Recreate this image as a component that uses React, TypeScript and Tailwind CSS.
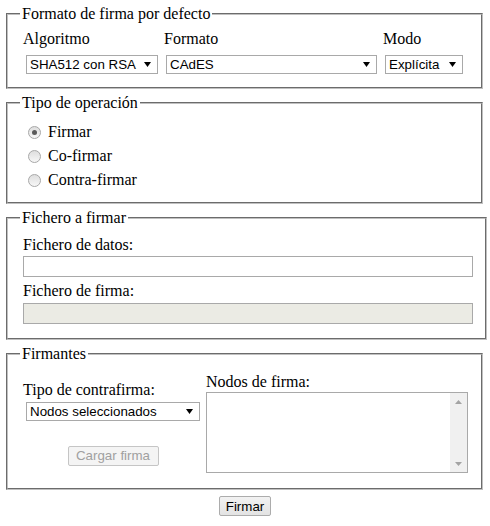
import React from "react";

const sans = "font-['Liberation_Sans',Arial,sans-serif]";

const Arrow = ({ color = "#000" }: { color?: string }) => (
  <svg width="7" height="5" viewBox="0 0 7 5" className="shrink-0">
    <path d="M0 0H7L3.5 5Z" fill={color} />
  </svg>
);

const FakeSelect = ({ value, className }: { value: string; className: string }) => (
  <div
    className={`flex h-[19px] items-center justify-between border border-[#a9a9a9] bg-white pl-[3px] pr-[6px] text-[13.33px] leading-[15px] text-black ${sans} ${className}`}
  >
    <span>{value}</span>
    <Arrow />
  </div>
);

const Radio = ({ label, checked }: { label: string; checked?: boolean }) => (
  <div className="flex h-[24px] items-center">
    <span className="ml-[5px] flex h-[13px] w-[13px] items-center justify-center rounded-full border border-[#a8a8a8] bg-linear-to-b from-[#dedede] to-[#f7f7f7]">
      {checked && <span className="h-[5px] w-[5px] rounded-full bg-[#5a5a5a]" />}
    </span>
    <span className="ml-[7px] leading-[18px]">{label}</span>
  </div>
);

const fieldset =
  "ml-[6px] border-2 border-[#c0c0c0] [border-style:groove] px-[12px]";
const legend = "px-[2px] leading-[18px]";

const App = () => {
  return (
    <div className="flex h-[526px] w-[490px] flex-col bg-white pt-[5px] font-['Liberation_Serif',serif] text-[16px] text-black">
      <fieldset className={`${fieldset} w-[477px] pt-[7px] pb-[13px]`}>
        <legend className={legend}>Formato de firma por defecto</legend>
        <div className="flex pl-[3px]">
          <div className="w-[141px]">
            <div className="leading-[18px]">Algoritmo</div>
            <FakeSelect value="SHA512 con RSA" className="mt-[7px] ml-[3px] w-[132px]" />
          </div>
          <div className="w-[219px]">
            <div className="leading-[18px]">Formato</div>
            <FakeSelect value="CAdES" className="mt-[7px] ml-[2px] w-[211px]" />
          </div>
          <div>
            <div className="leading-[18px]">Modo</div>
            <FakeSelect value="Explícita" className="mt-[7px] ml-[2px] w-[78px]" />
          </div>
        </div>
      </fieldset>

      <fieldset className={`${fieldset} mt-[5px] w-[477px] pt-[8px] pb-[10px]`}>
        <legend className={legend}>Tipo de operación</legend>
        <div className="pl-[3px]">
          <Radio label="Firmar" checked />
          <Radio label="Co-firmar" />
          <Radio label="Contra-firmar" />
        </div>
      </fieldset>

      <fieldset className={`${fieldset} mt-[5px] w-[480px] pt-[9px] pb-[14px]`}>
        <legend className={legend}>Fichero a firmar</legend>
        <div className="pl-[3px]">
          <div className="leading-[18px]">Fichero de datos:</div>
          <div className="mt-[2px] h-[21px] w-[450px] border border-[#a9a9a9] bg-white" />
          <div className="mt-[5px] leading-[18px]">Fichero de firma:</div>
          <div className="mt-[3px] h-[21px] w-[450px] border border-[#a9a9a9] bg-[#ebebe4]" />
        </div>
      </fieldset>

      <fieldset className={`${fieldset} mt-[5px] w-[477px] pt-[10px] pb-[15px]`}>
        <legend className={legend}>Firmantes</legend>
        <div className="flex items-center pl-[3px]">
          <div className="w-[183px]">
            <div className="leading-[18px]">Tipo de contrafirma:</div>
            <FakeSelect value="Nodos seleccionados" className="mt-[3px] ml-[3px] w-[174px]" />
            <div className="mt-[25px] ml-[3px] flex w-[174px] justify-center">
              <button
                disabled
                className={`h-[20px] w-[91px] rounded-[2px] border border-[#c5c5c5] bg-[#f4f4f4] text-[13.33px] leading-[15px] text-[#a0a0a0] ${sans}`}
              >
                Cargar firma
              </button>
            </div>
          </div>
          <div>
            <div className="leading-[18px]">Nodos de firma:</div>
            <div className="mt-[1px] flex h-[81px] w-[262px] border border-[#a9a9a9] bg-white">
              <div className="flex-1" />
              <div className="flex w-[17px] flex-col justify-between bg-[#f0f0f0]">
                <div className="flex h-[17px] items-center justify-center">
                  <svg width="7" height="4" viewBox="0 0 7 4">
                    <path d="M0 4H7L3.5 0Z" fill="#a3a3a3" />
                  </svg>
                </div>
                <div className="flex h-[17px] items-center justify-center">
                  <svg width="7" height="4" viewBox="0 0 7 4">
                    <path d="M0 0H7L3.5 4Z" fill="#a3a3a3" />
                  </svg>
                </div>
              </div>
            </div>
          </div>
        </div>
      </fieldset>

      <div className="mt-[6px] flex justify-center">
        <button
          className={`h-[20px] w-[52px] rounded-[2px] border border-[#acacac] bg-linear-to-b from-[#f2f2f2] to-[#e3e3e3] text-[13.33px] leading-[15px] text-black ${sans}`}
        >
          Firmar
        </button>
      </div>
    </div>
  );
};

export default App;
